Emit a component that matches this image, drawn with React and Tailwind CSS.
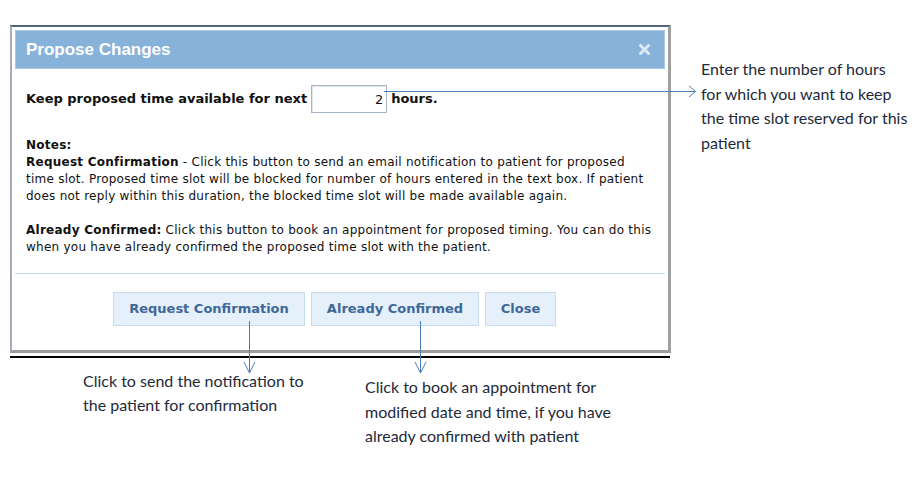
import { useState } from "react";

const titleFont = { fontFamily: '"Liberation Sans", Arial, sans-serif' };
const uiFont = { fontFamily: '"DejaVu Sans", Verdana, sans-serif' };
const noteFont = { fontFamily: 'Lato, "Liberation Sans", sans-serif' };

const Btn = ({ children, className }) => (
  <button
    className={`h-[34px] border border-[#c6dcef] bg-[#e5f0fb] text-[13px] font-bold text-[#3e6898] ${className}`}
    style={uiFont}
  >
    {children}
  </button>
);

const ProposeDialog = () => {
  const [hours, setHours] = useState("2");

  return (
    <div className="ml-[10px] mt-[25px] w-[661px] border-t-2 border-l-2 border-r-[3px] border-b-[3px] border-t-[#53657b] border-l-[#a3acb7] border-r-[#a0a0a0] border-b-[#9c9c9c] bg-white p-[3px] pb-[5px]" style={uiFont}>
      {/* title bar */}
      <div className="flex h-[39px] items-center justify-between border border-[#a8c8e6] bg-[#87b2d9] pl-[10px] pr-[14px]">
        <span className="text-[17px] font-bold text-white" style={titleFont}>Propose Changes</span>
        <svg width="11" height="11" viewBox="0 0 11 11">
          <path d="M1.5 1.5 L9.5 9.5 M9.5 1.5 L1.5 9.5" stroke="#dce9f5" strokeWidth="3" strokeLinecap="round" />
        </svg>
      </div>

      <div className="border-b border-[#c2d8ec] px-[11px] pb-[17px] pt-[16px] text-[#111]">
        <div className="flex items-center text-[13px] font-bold">
          <span>Keep proposed time available for next</span>
          <input
            value={hours}
            onChange={(e) => setHours(e.target.value)}
            className="ml-[4px] mr-[4px] h-[28px] w-[76px] border border-[#a7b6c6] px-[3px] text-right text-[13px] font-normal text-[#111] shadow-[inset_1px_1px_1px_#dfe5eb] outline-none"
          />
          <span>hours.</span>
        </div>

        <div className="mt-[24px] text-[12px] leading-[17px] tracking-[0.25px]">
          <div className="font-bold">Notes:</div>
          <p>
            <b>Request Confirmation</b> - Click this button to send an email notification to patient for proposed
            <br />
            time slot. Proposed time slot will be blocked for number of hours entered in the text box. If patient
            <br />
            does not reply within this duration, the blocked time slot will be made available again.
          </p>
          <p className="mt-[17px]">
            <b>Already Confirmed:</b> Click this button to book an appointment for proposed timing. You can do this
            <br />
            when you have already confirmed the proposed time slot with the patient.
          </p>
        </div>
      </div>

      <div className="flex justify-center gap-[6px] pb-[19px] pt-[18px] pr-[11px]">
        <Btn className="w-[192px]">Request Confirmation</Btn>
        <Btn className="w-[168px]">Already Confirmed</Btn>
        <Btn className="w-[71px]">Close</Btn>
      </div>
    </div>
  );
};

export default function App() {
  return (
    <div className="relative h-[489px] w-[917px] overflow-hidden bg-white">
      <ProposeDialog />
      <div className="ml-[10px] mt-[3px] h-[2px] w-[660px] bg-black" />

      {/* callout arrows */}
      <svg className="absolute left-0 top-0" width="917" height="489">
        <g stroke="#4a7ebb" strokeWidth="1" fill="none">
          <path d="M384 91.5 H695" />
          <path d="M689 86 L695.5 91.5 L689 97" />
          <path d="M249.5 321 V373" />
          <path d="M244 362 L249.5 373 L255 362" />
          <path d="M420.5 321 V373" />
          <path d="M415 362 L420.5 373 L426 362" />
        </g>
      </svg>

      <div className="absolute left-[701px] top-[57px] text-[16px] leading-[24.5px] text-[#1e2a3a]" style={noteFont}>
        Enter the number of hours
        <br />
        for which you want to keep
        <br />
        the time slot reserved for this
        <br />
        patient
      </div>
      <div className="absolute left-[83px] top-[369px] text-[16px] leading-[24px] text-[#1e2a3a]" style={noteFont}>
        Click to send the notification to
        <br />
        the patient for confirmation
      </div>
      <div className="absolute left-[365px] top-[375px] text-[16px] leading-[24.5px] text-[#1e2a3a]" style={noteFont}>
        Click to book an appointment for
        <br />
        modified date and time, if you have
        <br />
        already confirmed with patient
      </div>
    </div>
  );
}
